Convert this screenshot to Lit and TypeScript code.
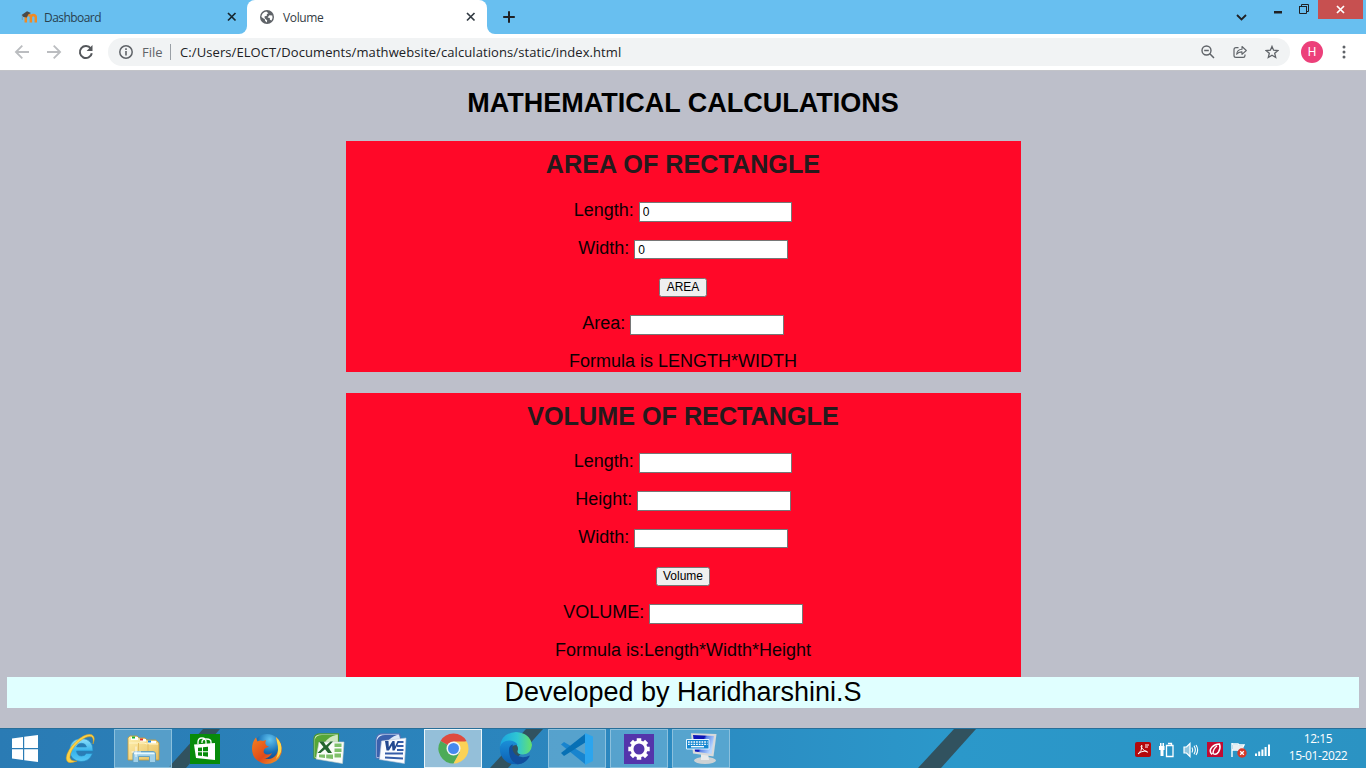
import { LitElement, html, css, svg, TemplateResult } from "lit";
import { customElement, property } from "lit/decorators.js";

const icon = (w: number, h: number, body: TemplateResult, cls = "") =>
  html`<svg class=${cls} width=${w} height=${h} viewBox="0 0 ${w} ${h}" aria-hidden="true">${body}</svg>`;

/* ---------- browser glyphs ---------- */
const moodle = svg`<path d="M4.800 13.500V8.600Q5 6 7.500 6 9.800 6 9.900 8.500 10.100 6 12.400 6 14.800 6.200 14.800 8.600V13.500M9.900 8.500V13.500" fill="none" stroke="#f08a24" stroke-width="2.500"/><path d="M.6 6 6 2.300 10 3.900 7.200 5.500 5.800 8.500 2.500 8Z" fill="#4b4a48"/><path d="M1.300 6.600V11" stroke="#8a8a8a" stroke-width=".7"/>`;
const globe = svg`<circle cx="7" cy="7" r="7" fill="#5f6368"/><path d="M6.3 1.4C3.2 2 1.4 4.300 1.400 7L5 9.500V10.800L6.800 12.600 7.200 10.400 4.700 8.200 4.500 6.600 7.100 5.600 6.700 4.200 8.400 3.200ZM9.300 5.200 12.300 5.400Q13.200 8 11.500 10.400L9.900 9.800 9.800 8 7.600 7.600Z" fill="#fff"/>`;
const cross = svg`<path d="M1 1 8.500 8.500M8.500 1 1 8.500" stroke="currentColor" stroke-width="1.700"/>`;
const plus = svg`<path d="M6 .2V11.800M.2 6H11.800" stroke="#202124" stroke-width="2"/>`;
const back = svg`<path d="M15 8H2.200M8.300 1.600 1.900 8 8.300 14.400" fill="none" stroke="#bbbdc0" stroke-width="1.800"/>`;
const forward = svg`<path d="M1 8H13.800M7.700 1.600 14.100 8 7.700 14.400" fill="none" stroke="#bbbdc0" stroke-width="1.800"/>`;
const reload = svg`<path d="M12.800 4.600A6 6 0 1 0 13.800 9.200" fill="none" stroke="#54575b" stroke-width="2"/><path d="M14.500 1V6.900H8.600Z" fill="#54575b"/>`;
const info = svg`<circle cx="7" cy="7" r="6.200" fill="none" stroke="#5f6368" stroke-width="1.500"/><path d="M7 6V10.600M7 3.300V4.900" stroke="#5f6368" stroke-width="1.600"/>`;
const zoomOut = svg`<circle cx="5.500" cy="5.500" r="4.500" fill="none" stroke="#5f6368" stroke-width="1.400"/><path d="M3.200 5.500H7.800M8.800 8.800 13 13" stroke="#5f6368" stroke-width="1.500"/>`;
const share = svg`<path d="M5.500 2.700H3Q1 2.700 1 4.700V10.500Q1 12.400 3 12.400H10.200Q12 12.400 12 10.500V9.400" fill="none" stroke="#5f6368" stroke-width="1.200"/><path d="M3.700 9.300Q4.100 4.300 9 4.200V1.500L13.300 5.500 9 9.300V6.900Q5.600 6.700 3.700 9.300Z" fill="none" stroke="#5f6368" stroke-width="1.100" stroke-linejoin="round"/>`;
const star = svg`<path d="M7 1.400 8.600 5.200 12.900 5.600 9.700 8.300 10.700 12.500 7 10.300 3.300 12.500 4.300 8.300 1.100 5.600 5.400 5.200Z" fill="none" stroke="#5f6368" stroke-width="1.300"/>`;
const dots = svg`<g fill="#5f6368"><circle cx="2" cy="2" r="1.500"/><circle cx="2" cy="7" r="1.500"/><circle cx="2" cy="12" r="1.500"/></g>`;

/* ---------- taskbar artwork ---------- */
const windowsLogo = svg`<path d="M0 3.500 11 2V13H0ZM12.200 1.800 26 0V13H12.200ZM0 14.200H11V25L0 23.500ZM12.200 14.200H26V27L12.200 25.200Z" fill="#fff"/>`;
const ie = svg`<defs><linearGradient id="ie-blue" x2="0" y2="1"><stop stop-color="#8fe0fb"/><stop offset=".55" stop-color="#35b2ec"/><stop offset="1" stop-color="#59c9f5"/></linearGradient></defs><path d="M28 18H11.500Q12 23 16.600 23 20 23 21.200 20.500H27.500Q24.500 28.500 16 28.500 5 27.800 4.600 17 5 6 16.500 5.500 28 6 28 18ZM11.500 14H21.500Q20.800 10.400 16.600 10.300 12.300 10.500 11.500 14Z" fill="url(#ie-blue)" stroke="#2387bd" stroke-width=".6"/><path d="M28 11Q31 4 27 1.800 21 -.5 11 8.500 1.500 18 1.200 25 1.500 32.500 12 28 5.500 28.500 4.900 24.500 5 17 14 8.700 22 2.500 26.500 3.800 29 5.300 28 11Z" fill="#fbd145" stroke="#d99d1c" stroke-width=".5"/>`;
const explorer = svg`<defs><linearGradient id="folder" x2="1" y2="1"><stop stop-color="#fff1b0"/><stop offset="1" stop-color="#e6bd5c"/></linearGradient></defs><path d="M1 27V5L3 3H10L12 5H18L20 7H29L32 10V27Z" fill="url(#folder)" stroke="#c59a3b" stroke-width=".8"/><path d="M4 4H11V7H4ZM13 6H19V8.500H13ZM21 8H29V10.500H21Z" fill="#fff"/><path d="M5 3.500H8V5.500H5Z" fill="#18b22d"/><path d="M13 5.500H16V7.500H13Z" fill="#e03225"/><path d="M21 7.500H24V9.500H21Z" fill="#1684dd"/><path d="M2 10H17L20 11H31" fill="none" stroke="#fff5c7"/><path d="M21 11V20M11.500 10V20" stroke="#e3bd62"/><path d="M6 29.500V21Q6 18.500 8 18.500H26Q28.500 18.500 28.500 21V29.500H22.500V23.500H11.500V29.500Z" fill="#9fd0e9" stroke="#5c9cbf" stroke-width=".9"/><path d="M7 20.500H27.500" stroke="#e8faff" stroke-width="1.500"/><path d="M9 13.500V24M4.500 19H14" stroke="#fff" opacity=".85"/>`;
const store = svg`<path d="M0 0H30V30H0Z" fill="#078b0a"/><path d="M8 10V8Q8 4 12 4 16 4 16 8V10M12 9V8Q12 5 16.500 5 21 5 21 8V10" fill="none" stroke="#fff" stroke-width="1.300"/><path d="M4 10.500 25 9V26L6 24Z" fill="#fff"/><path d="M8 13.800 12 13.400V17.300H8ZM13 13.300 18 12.800V17.300H13ZM8 18.300H12V21.900L8 21.400ZM13 18.300H18V22.700L13 22Z" fill="#078b0a"/>`;
const firefox = svg`<defs><radialGradient id="ff-globe" cx=".6" cy=".2" r=".9"><stop stop-color="#61c4f0"/><stop offset=".5" stop-color="#176fb5"/><stop offset="1" stop-color="#102f70"/></radialGradient><linearGradient id="ff-fur" x2="1" y2="1"><stop stop-color="#f58220"/><stop offset=".55" stop-color="#df4a1b"/><stop offset="1" stop-color="#f7a52b"/></linearGradient></defs><circle cx="16" cy="15" r="14" fill="url(#ff-globe)"/><path d="M25 4Q32 10 30.500 20 27 31 15 31 1.500 29 1 16 1 9 5 4.500L6.500 8.500Q9 7 12 8L15 7Q14 10 14.500 11 15 13 18 13.500L14 15.500Q12 17 13 20 16 23 21 20 18 26 13 25 20 28 25 22 29 17 26 9Z" fill="url(#ff-fur)"/><path d="M25 4Q32 10 30 19 28.500 23 25 26 28.500 17 26 9Z" fill="#fbd849"/>`;
const excel = svg`<path d="M1 25V5Q2 .8 7 .8H25.500V10L8 26Z" fill="#cfe8bf" stroke="#47952c" stroke-width="1.200"/><path d="M2 24V6Q3.500 2 9 2H23Q9 5 7 25Z" fill="#56a637"/><path d="M6 9 31 9 29.500 30.500 3 26Z" fill="#fafcf8" stroke="#c5ceca" stroke-width=".6"/><path d="M21.500 10.500H28.500V14H21.500ZM21.500 15.500H28.500V19H21.500ZM21.500 20.500H28V24.500H21.500ZM6 21.500H12V25L6 24.200ZM13.200 21.500H20V26L13.200 25.200Z" fill="#7fc06a"/><path d="M6 8.500H10.500L13 12.500 17.500 8.500H20L15 14 19 20H15L12 16.200 7.500 20H4.500L10.500 14Z" fill="#24662e"/>`;
const word = svg`<path d="M1 25V6Q2 .8 7 .8H24.500L26 7 8 26Z" fill="#dce7f6" stroke="#4c6fb5" stroke-width="1.200"/><path d="M2 24V7Q4 2 10 2H22Q9 6 6 25Z" fill="#3b61ad"/><path d="M6.500 8 31 5 29.500 30.500 4.500 26.500Z" fill="#fafcff" stroke="#b5c2d8" stroke-width=".6"/><path d="M23 9H28.500M22 13H28.500M22 17H28.500M10 20.500H28M10 24.500 28 25.500" stroke="#355da8" stroke-width="2"/><path d="M10 8H13.500L13.800 14 17.500 8H19.500L20 13.500 22.500 8H24.500L19.500 17.500H17.500L17 12.500 14 17.500H11.500Z" fill="#23498f"/>`;
const chrome = svg`<path d="M15.500 15.500 2.500 8A15 15 0 0 1 28.500 8Z" fill="#df4b3e"/><path d="M15.500 15.500 2.500 8A15 15 0 0 0 15.500 30.500L22 19Z" fill="#4dab58"/><path d="M15.500 8.500H28.800A15 15 0 0 1 15.500 30.500L22 19Z" fill="#fbd256"/><circle cx="15.500" cy="15.500" r="7" fill="#f2f5f8"/><circle cx="15.500" cy="15.500" r="5.500" fill="#4689ee"/>`;
const edge = svg`<defs><linearGradient id="edge-top" x2="1"><stop stop-color="#1aa4e0"/><stop offset=".55" stop-color="#2fc7d3"/><stop offset="1" stop-color="#66e16a"/></linearGradient><linearGradient id="edge-low" x2="0" y2="1"><stop stop-color="#1b8fd8"/><stop offset="1" stop-color="#0c5fb3"/></linearGradient></defs><path d="M1 15Q2 1 17 0 31 1 33 13 32 22 24 22.500 18 22.500 18.500 19 20 16 17 12 11 7 3 12Z" fill="url(#edge-top)"/><path d="M.8 15Q3 8 11 8.500 17 9 18.500 13 12 12 10.500 20 11 31 21 32 7 34 2 23 .5 19 .8 15Z" fill="url(#edge-low)"/><path d="M10 18Q10 13 14 12.500 12 19 17 23 23 27 31 23.500 27 32 18.500 32.300 10 29 10 18Z" fill="#114f9e"/>`;
const vscode = svg`<path d="M3 9 0 11.500 24 31 25 22Z" fill="#1884ce"/><path d="M24 1 0 20 3 23 25 9Z" fill="#0770b5"/><path d="M24 0 32 3.500V28L24 32Z" fill="#2ba5ee"/>`;
const gear = svg`<path d="M0 0H30V30H0Z" fill="#5435ab"/><g stroke="#fff" stroke-width="4.500"><path d="M15 4.300V25.700M4.300 15H25.700M7.400 7.400 22.600 22.600M22.600 7.400 7.400 22.600"/></g><circle cx="15" cy="15" r="8.500" fill="#fff"/><circle cx="15" cy="15" r="5.500" fill="#5435ab"/>`;
const remote = svg`<defs><linearGradient id="screen" x2="1" y2=".4"><stop stop-color="#1017bb"/><stop offset=".5" stop-color="#0b12b5"/><stop offset=".6" stop-color="#5d86ea"/><stop offset="1" stop-color="#b9d7ff"/></linearGradient></defs><ellipse cx="19" cy="27.500" rx="11" ry="3.500" fill="#cdd2d4"/><path d="M15 20H22L23 27H15Z" fill="#e8eaeb"/><path d="M5 .3 30.500 1 27.500 23.500 7 20.500Z" fill="#d8dadb"/><path d="M7 2 28 3 25.500 21 9 18.500Z" fill="url(#screen)"/><path d="M.5 6.500H23V16H.5Z" fill="#1687d1" stroke="#e3f5ff" stroke-width="1"/><path d="M2 9H21.500M2 11.300H21.500" stroke="#fff" stroke-width="1.300" stroke-dasharray="1.700 1"/><path d="M5 13.700H18" stroke="#fff" stroke-width="1.300"/>`;

/* ---------- notification area ---------- */
const acrobat = svg`<rect width="16" height="15" rx="2" fill="#b4090c"/><path d="M3 12Q7 9 7 4 7 2.500 6 4 6 7 12.500 10.300 13 9.300 10 9 5.500 9.300 3 12M10 3H14M10 5H13" fill="none" stroke="#fff" stroke-width="1"/>`;
const battery = svg`<path d="M0 4H5.500V8H4.500V14H1.500V8H0ZM1 1H2.500V4H1ZM3.500 1H5V4H3.500Z" fill="#fff"/><path d="M7.500 3.500H14V14.500H7.500ZM9 1.500H12.500V3" fill="none" stroke="#fff" stroke-width="1.300"/>`;
const speaker = svg`<path d="M1 5H3.500L7 1.500V14.500L3.500 11H1Z" fill="#8fc6df" stroke="#fff" stroke-width="1.200"/><path d="M9 5.500Q10.500 8 9 10.500M11 3.800Q13.700 8 11 12.200M13 3Q16.300 8 13 13" fill="none" stroke="#fff" stroke-width="1.100"/>`;
const redLeaf = svg`<path d="M0 0H16V15H0Z" fill="#c20b32"/><path d="M5 12.500Q1.500 9 5 5 8 2 12.500 2 14 6 11.500 10 9 13.500 6 11.500 6 7 10 4" fill="none" stroke="#fff" stroke-width="1.500"/>`;
const flag = svg`<path d="M1 1V15M1.500 2H7L8.500 3H13L11.500 6 13 9H8L6.500 8H1.500" fill="none" stroke="#fff" stroke-width="1.400"/><path d="M2 2.500H7L8.500 3.500H12V8H2Z" fill="#e9eff2"/><circle cx="11" cy="11" r="4.700" fill="#d63929"/><path d="M9.200 9.200 12.800 12.800M12.800 9.200 9.200 12.800" stroke="#fff" stroke-width="1.300"/>`;
const signal = svg`<path d="M0 9.500H2V12H0ZM3.200 7.500H5.200V12H3.200ZM6.400 5.500H8.400V12H6.400ZM9.600 3H11.600V12H9.600ZM13 .500H15V12H13Z" fill="#fff"/>`;

@customElement("browser-chrome")
class BrowserChrome extends LitElement {
  static styles = css`
    :host { display: block; font-family: "Open Sans", "Noto Sans", sans-serif; }
    svg { display: block; flex: none; }
    .strip { height: 34px; display: flex; background: #68bff0; }
    .tab { display: flex; align-items: center; box-sizing: border-box; font-size: 12px; color: #333b43; }
    .back-shell { width: 247px; background: #fff; }
    .inactive { width: 247px; height: 34px; padding: 0 10px 0 21px; background: #68bff0; border-radius: 0 0 8px 0; color: #29414f; }
    .active { width: 240px; background: #fff; border-radius: 8px 8px 0 0; padding: 0 11px 0 13px; }
    .label { flex: 1; margin-left: 7px; letter-spacing: -0.550px; }
    .active .label { margin-left: 9px; letter-spacing: -0.350px; }
    .inactive .x { color: #17262f; }
    .rest-shell { flex: 1; background: #fff; }
    .rest { height: 34px; display: flex; background: #68bff0; border-radius: 0 0 0 8px; box-sizing: border-box; padding-left: 16px; }
    .plus { margin-top: 11px; }
    .chev { margin: 14px 0 0 auto; }
    .min { margin: 10px 0 0 27px; }
    .max { margin: 4px 0 0 17px; }
    .close { width: 45px; height: 19px; margin: 0 3px 0 8px; background: #c75050; color: #fff; display: flex; align-items: center; justify-content: center; }
    .toolbar { height: 36px; background: #fff; border-bottom: 1px solid #c2c3c8; display: flex; align-items: center; }
    .back { margin-left: 14px; }
    .fwd { margin-left: 16px; }
    .rel { margin-left: 16px; }
    .omni { width: 1182px; height: 28px; box-sizing: border-box; margin-left: 14px; border-radius: 14px; background: #f1f3f4; display: flex; align-items: center; padding: 0 11px; font-size: 13px; color: #202124; }
    .file { width: 28px; margin-left: 9px; color: #5f6368; }
    .url { margin-left: 9px; flex: 1; white-space: nowrap; letter-spacing: 0.090px; }
    .rule { width: 1px; height: 16px; background: #9aa0a6; }
    .omni .ic { margin-left: 18px; }
    .avatar { width: 22px; height: 22px; border-radius: 50%; background: #ec407a; color: #fff; font: 12px/22px Roboto, sans-serif; text-align: center; margin-left: 11px; }
    .dots { margin-left: 19px; }
  `;
  render() {
    return html`
      <div class="strip">
        <div class="back-shell"><div class="tab inactive">${icon(16, 16, moodle)}<span class="label">Dashboard</span>${icon(10, 10, cross, "x")}</div></div>
        <div class="tab active">${icon(14, 14, globe)}<span class="label">Volume</span>${icon(10, 10, cross)}</div>
        <div class="rest-shell"><div class="rest">
          ${icon(12, 12, plus, "plus")}
          ${icon(11, 7, svg`<path d="M1 1 5.500 5.500 10 1" fill="none" stroke="#202124" stroke-width="1.800"/>`, "chev")}
          ${icon(8, 4, svg`<path d="M0 1H8V3.500H0Z" fill="#202124"/>`, "min")}
          ${icon(11, 11, svg`<path d="M.5 2.500H7.500V9.500H.5ZM2.500 2.500V.5H9.500V7.500H7.500" fill="none" stroke="#202124"/><path d="M0 2.500H8" stroke="#202124"/>`, "max")}
          <div class="close">${icon(9, 9, svg`<path d="M1 1 8 8M8 1 1 8" stroke="#fff" stroke-width="1.700"/>`)}</div>
        </div></div>
      </div>
      <div class="toolbar">
        ${icon(16, 16, back, "back")}${icon(16, 16, forward, "fwd")}${icon(16, 16, reload, "rel")}
        <div class="omni">${icon(14, 14, info)}<span class="file">File</span><span class="rule"></span>
          <span class="url">C:/Users/ELOCT/Documents/mathwebsite/calculations/static/index.html</span>
          ${icon(14, 14, zoomOut, "ic")}${icon(14, 14, share, "ic")}${icon(14, 14, star, "ic")}
        </div>
        <div class="avatar">H</div>${icon(4, 14, dots, "dots")}
      </div>`;
  }
}

type Row = { label?: string; value?: string; button?: string; note?: string };

@customElement("calc-card")
class CalcCard extends LitElement {
  @property() heading = "";
  @property({ attribute: false }) rows: Row[] = [];
  static styles = css`
    :host { display: block; width: 675px; background: #ff0828; box-sizing: border-box; overflow: hidden; color: #0c0003; font: 18px/20px "Liberation Sans", Arial, sans-serif; }
    h2 { margin: 0; height: var(--heading-height, 52px); font-size: 25.2px; line-height: 47px; color: #251a1c; text-align: center; }
    .row { height: 37.75px; display: flex; justify-content: center; align-items: center; }
    .label { margin: -4px 5px 0 0; }
    .note { margin-top: -4px; }
    input { width: 153.500px; height: 19.500px; box-sizing: border-box; padding: 1px 2px 1px 3px; border: 1px solid #767676; background: #fff; font: 12px "Liberation Sans", sans-serif; color: #000; }
    button { min-width: 48px; height: 19px; box-sizing: border-box; padding: 0 6px; border: 1px solid #767676; border-radius: 2.500px; background: #efefef; font: 12px "Liberation Sans", sans-serif; color: #000; }
  `;
  render() {
    return html`<h2>${this.heading}</h2>${this.rows.map(r => html`<div class="row">${
      r.button ? html`<button>${r.button}</button>` :
      r.note ? html`<span class="note">${r.note}</span>` :
      html`<span class="label">${r.label}</span><input .value=${r.value ?? ""}>`}</div>`)}`;
  }
}

@customElement("task-bar")
class TaskBar extends LitElement {
  static styles = css`
    :host { position: relative; display: flex; height: 40px; box-sizing: border-box; border-top: 1px solid #286f99; color: #fff; font-family: "Open Sans", sans-serif;
      background: linear-gradient(90deg, #2a7bb4, #2b87bf 45%, #2b98ca 70%, #2b93c3); }
    svg { display: block; overflow: visible; flex: none; }
    .beams { position: absolute; left: 0; top: 0; overflow: hidden; }
    .slots, .tray { position: relative; }
    .slots { display: flex; }
    .slot { width: 58px; height: 39px; margin-right: 4px; box-sizing: border-box; display: flex; align-items: center; justify-content: center; }
    .start { width: 50px; margin-right: 2px; }
    .open { background: rgba(130, 190, 220, .5); border: 1px solid #8bc0dd; }
    .focused { background: #94bfd9; border: 1px solid #eaf5fa; }
    .tray { margin-left: auto; display: flex; align-items: center; gap: 8px; padding-top: 2px; }
    .clock { width: 76px; height: 40px; margin-left: 1px; margin-right: 10px; padding-top: 1px; text-align: center; font-size: 12px; line-height: 17px; letter-spacing: -0.400px; }
    .clock div { white-space: nowrap; }
  `;
  render() {
    const slot = (w: number, h: number, art: TemplateResult, cls = "") => html`<div class="slot ${cls}">${icon(w, h, art)}</div>`;
    return html`
      ${icon(1366, 39, svg`<g fill="#31525f"><path d="M203 0H220L186 39H168Z"/><path d="M526 0H543L508 39H490Z"/><path d="M954 0H976L941 39H918Z"/></g>`, "beams")}
      <div class="slots">
        ${slot(26, 27, windowsLogo, "start")}${slot(32, 32, ie)}${slot(33, 31, explorer, "open")}${slot(30, 30, store)}
        ${slot(32, 32, firefox)}${slot(32, 32, excel)}${slot(32, 32, word)}${slot(31, 31, chrome, "focused")}
        ${slot(33, 33, edge)}${slot(32, 32, vscode, "open")}${slot(30, 30, gear, "open")}${slot(31, 31, remote, "open")}
      </div>
      <div class="tray">${icon(16, 15, acrobat)}${icon(16, 16, battery)}${icon(16, 16, speaker)}${icon(16, 15, redLeaf)}${icon(16, 16, flag)}${icon(16, 12, signal)}
        <div class="clock"><div>12:15</div><div>15-01-2022</div></div></div>`;
  }
}

@customElement("app-root")
class AppRoot extends LitElement {
  static styles = css`
    :host { display: flex; flex-direction: column; width: 1366px; height: 768px; overflow: hidden; background: #bdbfca; font-family: "Liberation Sans", Arial, sans-serif; color: #000; }
    main { flex: 1; min-height: 0; display: flex; flex-direction: column; align-items: center; }
    h1 { margin: 0; height: 70px; font-size: 27px; line-height: 65px; letter-spacing: 0; }
    .area { height: 231px; margin-bottom: 21px; }
    .volume { height: 284px; --heading-height: 51.250px; }
    footer { width: 1352px; height: 31px; background: #e0ffff; text-align: center; font-size: 27px; line-height: 30px; }
  `;
  render() {
    return html`
      <browser-chrome></browser-chrome>
      <main>
        <h1>MATHEMATICAL CALCULATIONS</h1>
        <calc-card class="area" heading="AREA OF RECTANGLE" .rows=${[
          { label: "Length:", value: "0" }, { label: "Width:", value: "0" }, { button: "AREA" }, { label: "Area:" }, { note: "Formula is LENGTH*WIDTH" }]}></calc-card>
        <calc-card class="volume" heading="VOLUME OF RECTANGLE" .rows=${[
          { label: "Length:" }, { label: "Height:" }, { label: "Width:" }, { button: "Volume" }, { label: "VOLUME:" }, { note: "Formula is:Length*Width*Height" }]}></calc-card>
        <footer>Developed by Haridharshini.S</footer>
      </main>
      <task-bar></task-bar>`;
  }
}
